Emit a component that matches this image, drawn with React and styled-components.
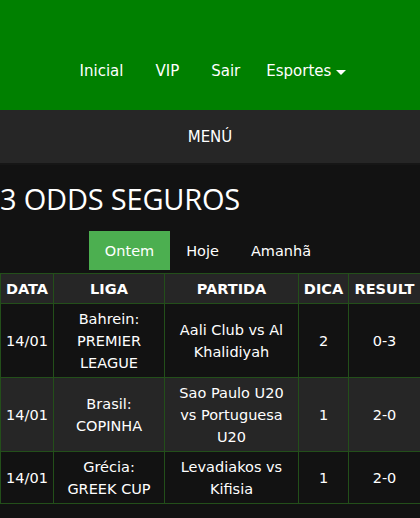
import React, { useState } from 'react';
import styled, { createGlobalStyle } from 'styled-components';

const GlobalStyle = createGlobalStyle`
  html, body {
    margin: 0;
    padding: 0;
    background: #121212;
  }
  body {
    font-family: "DejaVu Sans", Verdana, sans-serif;
    color: #ffffff;
  }
`;

const Header = styled.header`
  background: #008000;
  height: 110px;
  display: flex;
  align-items: center;
  justify-content: center;
  padding-top: 32px;
  box-sizing: border-box;
`;

const Nav = styled.nav`
  display: flex;
  align-items: center;
  gap: 32px;
  margin-left: 6px;
`;

const NavLink = styled.a`
  color: #ffffff;
  font-size: 15px;
  text-decoration: none;
  display: flex;
  align-items: center;
  gap: 5px;
  margin-left: ${p => p.$pull || 0}px;
`;

const Caret = styled.span`
  width: 0;
  height: 0;
  border-left: 5px solid transparent;
  border-right: 5px solid transparent;
  border-top: 5px solid #ffffff;
  margin-top: 2px;
`;

const MenuBar = styled.div`
  background: #262626;
  height: 55px;
  display: flex;
  align-items: center;
  justify-content: center;
  font-size: 15px;
  border-bottom: 2px solid #161616;
  box-sizing: border-box;
`;

const Title = styled.h1`
  margin: 14px 0 0;
  font-family: "Open Sans", "Noto Sans", sans-serif;
  font-weight: 400;
  font-size: 29px;
  line-height: 40px;
  letter-spacing: -0.2px;
`;

const Tabs = styled.div`
  display: flex;
  justify-content: center;
  margin-top: 12px;
  margin-right: 4px;
`;

const Tab = styled.button`
  border: none;
  background: ${p => (p.$active ? '#4caf50' : 'transparent')};
  color: #ffffff;
  font-family: inherit;
  font-size: 14.5px;
  height: 39px;
  padding: 0 16px;
  cursor: pointer;
`;

const Table = styled.table`
  width: 420px;
  table-layout: fixed;
  border-collapse: collapse;
  margin-top: 3px;
  font-size: 14.5px;
  text-align: center;
`;

const Th = styled.th`
  background: #262626;
  border: 1px solid #234f1a;
  height: 29px;
  padding: 0;
  font-family: "DejaVu Sans", Verdana, sans-serif;
  font-weight: 700;
  font-size: 14.5px;
`;

const Row = styled.tr`
  background: ${p => (p.$alt ? '#262626' : '#121212')};
`;

const Td = styled.td`
  border: 1px solid #234f1a;
  padding: 4px 2px 3px;
  line-height: 22px;
`;

const matches = [
  { date: '14/01', league: ['Bahrein:', 'PREMIER', 'LEAGUE'], game: ['Aali Club vs Al', 'Khalidiyah'], tip: '2', result: '0-3' },
  { date: '14/01', league: ['Brasil:', 'COPINHA'], game: ['Sao Paulo U20', 'vs Portuguesa', 'U20'], tip: '1', result: '2-0' },
  { date: '14/01', league: ['Grécia:', 'GREEK CUP'], game: ['Levadiakos vs', 'Kifisia'], tip: '1', result: '2-0' },
];

const Lines = ({ items }) => items.map((t, i) => <div key={i}>{t}</div>);

export default function App() {
  const [tab, setTab] = useState('Ontem');
  return (
    <>
      <GlobalStyle />
      <Header>
        <Nav>
          <NavLink href="#">Inicial</NavLink>
          <NavLink href="#">VIP</NavLink>
          <NavLink href="#">Sair</NavLink>
          <NavLink href="#" $pull={-6}>Esportes <Caret /></NavLink>
        </Nav>
      </Header>
      <MenuBar>MENÚ</MenuBar>
      <Title>3 ODDS SEGUROS</Title>
      <Tabs>
        {['Ontem', 'Hoje', 'Amanhã'].map(t => (
          <Tab key={t} $active={tab === t} onClick={() => setTab(t)}>{t}</Tab>
        ))}
      </Tabs>
      <Table>
        <colgroup>
          <col style={{ width: 53 }} />
          <col style={{ width: 111 }} />
          <col style={{ width: 134 }} />
          <col style={{ width: 50 }} />
          <col style={{ width: 72 }} />
        </colgroup>
        <thead>
          <tr>
            <Th>DATA</Th>
            <Th>LIGA</Th>
            <Th>PARTIDA</Th>
            <Th>DICA</Th>
            <Th>RESULT</Th>
          </tr>
        </thead>
        <tbody>
          {matches.map((m, i) => (
            <Row key={i} $alt={i % 2 === 1}>
              <Td>{m.date}</Td>
              <Td><Lines items={m.league} /></Td>
              <Td><Lines items={m.game} /></Td>
              <Td>{m.tip}</Td>
              <Td>{m.result}</Td>
            </Row>
          ))}
        </tbody>
      </Table>
    </>
  );
}
